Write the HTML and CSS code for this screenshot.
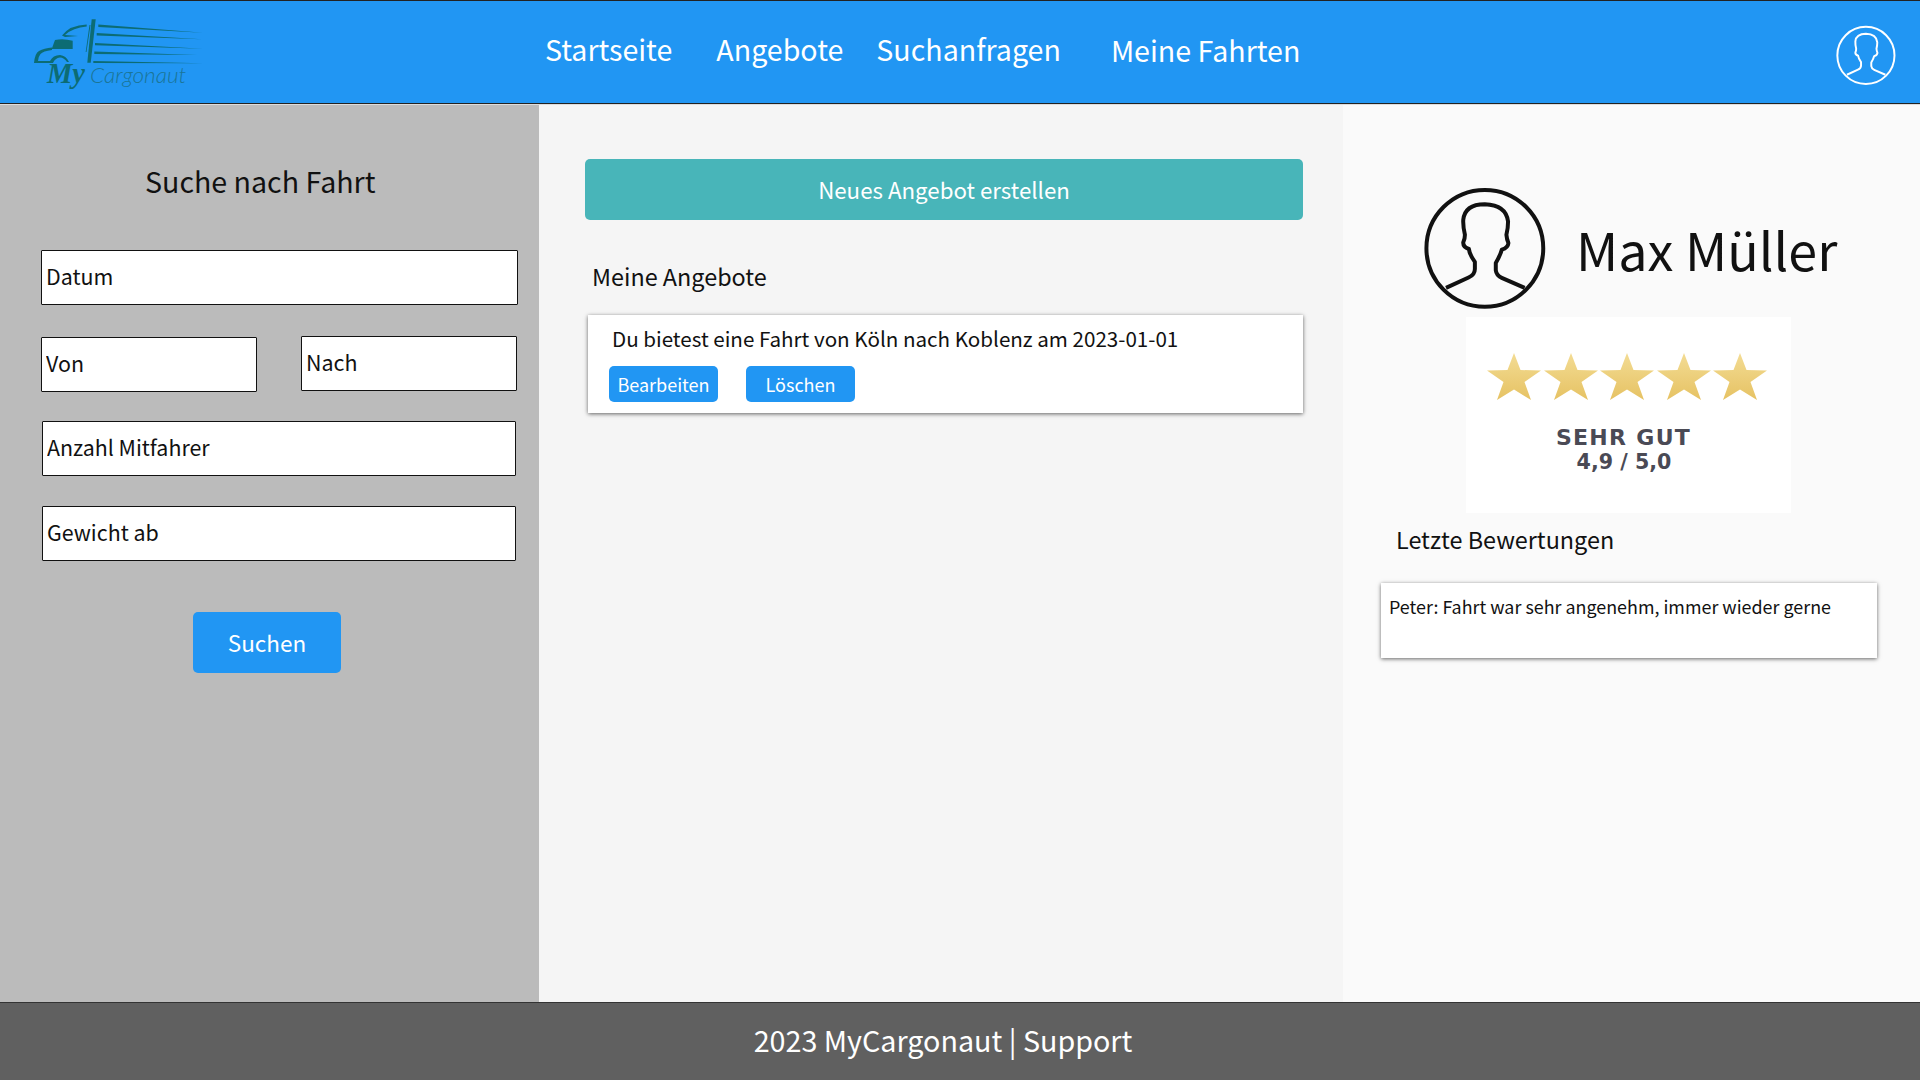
FILE: index.html
```html
<!DOCTYPE html>
<html lang="de">
<head>
    <meta charset="UTF-8">
    <meta name="viewport" content="width=device-width, initial-scale=1.0">
    <title>MyCargonaut</title>
    <link rel="stylesheet" href="styles.css">
</head>
<body>

    <svg class="defs" width="0" height="0">
        <defs>
            <symbol id="person" viewBox="0 0 505 473">
                <circle cx="252" cy="236" r="176" fill="none" stroke="currentColor" stroke-width="12"/>
                <path d="M135 355 L203 324 Q222 315 222 298 L222 277 Q206 255 204 238 Q186 232 187 218 Q192 208 192 195 Q186 170 187 150 Q192 103 252 103 Q316 105 322 155 Q322 175 317 195 Q318 208 323 220 Q322 234 303 240 Q298 258 285 280 L285 302 Q287 318 303 325 L372 355" fill="none" stroke="currentColor" stroke-width="12" stroke-linejoin="round"/>
            </symbol>
            <linearGradient id="gold" x1="0" y1="0" x2="0" y2="1">
                <stop offset="0" stop-color="#f3dc94"/>
                <stop offset="1" stop-color="#e6c263"/>
            </linearGradient>
            <symbol id="star" viewBox="0 0 54 47">
                <polygon points="27,0 33.5,17 54,17.5 37.5,29 44,47 27,36.5 10,47 16.5,29 0,17.5 20.5,17" fill="url(#gold)"/>
            </symbol>
        </defs>
    </svg>

    <header class="topbar">
        <svg class="logo" viewBox="0 0 190 75" width="190" height="75">
            <g fill="#0c6c74">
                <polygon points="58.7,1.3 62.7,1.3 57.7,44.7 54.3,44.7"/>
                <polygon points="65.3,6.5 170,14.7 65.3,9"/>
                <polygon points="63.7,15 168.7,21.3 63.7,17.5"/>
                <polygon points="62,25 170,30.7 62,27.2"/>
                <polygon points="61.3,33.5 163.7,37 61.3,36"/>
                <polygon points="60.3,43 170,45.3 60.3,45"/>
                <path d="M22 22 Q30 20 39.7 22.7 L39.7 31 L18.7 31 Z"/>
                <path d="M29 17.5 Q37 7 53.7 6.5 L53.7 8.5 Q40 9.5 32 17 L45 18 L32 19 Z"/>
                <polygon points="56.5,7 57.5,7 53.5,34 52.7,34"/>
                <path d="M1 45 Q2 35 6 33 Q11 30 19 29.5 L19 32 Q10 33 7.5 36 Q5 39 5 43 L17 43 Q20 37 27 37 Q33 37.5 36 44 L34 44 Q31 39.5 27 39.5 Q22 40 20 45 Z"/>
            </g>
            <text class="logo-my" x="14" y="65">My</text>
            <text class="logo-name" x="57" y="65">Cargonaut</text>
        </svg>
        <nav class="mainnav">
            <a class="nav-start" href="#">Startseite</a>
            <a class="nav-angebote" href="#">Angebote</a>
            <a class="nav-suche" href="#">Suchanfragen</a>
            <a class="nav-fahrten" href="#">Meine Fahrten</a>
        </nav>
        <svg class="top-user"><use href="#person"/></svg>
    </header>

    <main class="content">
        <aside class="search">
            <h2>Suche nach Fahrt</h2>
            <form>
                <input class="field field-datum" type="text" placeholder="Datum">
                <div class="route-row">
                    <input class="field field-von" type="text" placeholder="Von">
                    <input class="field field-nach" type="text" placeholder="Nach">
                </div>
                <input class="field field-wide field-anzahl" type="text" placeholder="Anzahl Mitfahrer">
                <input class="field field-wide" type="text" placeholder="Gewicht ab">
                <button class="btn btn-search" type="button">Suchen</button>
            </form>
        </aside>

        <section class="offers">
            <button class="btn btn-new" type="button">Neues Angebot erstellen</button>
            <h3>Meine Angebote</h3>
            <div class="card offer-card">
                <p>Du bietest eine Fahrt von Köln nach Koblenz am 2023-01-01</p>
                <div class="offer-actions">
                    <button class="btn btn-small" type="button">Bearbeiten</button>
                    <button class="btn btn-small" type="button">Löschen</button>
                </div>
            </div>
        </section>

        <section class="profile">
            <div class="profile-head">
                <svg class="big-user"><use href="#person"/></svg>
                <h1>Max Müller</h1>
            </div>
            <div class="rating">
                <div class="stars">
                    <svg class="star"><use href="#star"/></svg>
                    <svg class="star"><use href="#star"/></svg>
                    <svg class="star"><use href="#star"/></svg>
                    <svg class="star"><use href="#star"/></svg>
                    <svg class="star"><use href="#star"/></svg>
                </div>
                <div class="rating-label">SEHR GUT</div>
                <div class="rating-value">4,9 / 5,0</div>
            </div>
            <h3>Letzte Bewertungen</h3>
            <div class="card review-card">Peter: Fahrt war sehr angenehm, immer wieder gerne</div>
        </section>
    </main>

    <footer class="bottombar">2023 MyCargonaut | Support</footer>

</body>
</html>
```

FILE: styles.css
```css
* {
    box-sizing: border-box;
}
body {
    margin: 0;
    height: 1080px;
    overflow: hidden;
    display: flex;
    flex-direction: column;
    font-family: "Noto Sans CJK SC", "Noto Sans", sans-serif;
    color: #111;
}
.defs {
    position: absolute;
}
h1, h2, h3, p {
    margin: 0;
    font-weight: 400;
}

/* top bar */
.topbar {
    height: 104px;
    flex: none;
    display: flex;
    align-items: flex-start;
    background-color: #2196f3;
    border-top: 1px solid #222;
    border-bottom: 1px solid #222;
}
.logo {
    margin: 17px 0 0 33px;
    flex: none;
}
.logo-my {
    font-family: "Liberation Serif", serif;
    font-style: italic;
    font-weight: 700;
    font-size: 28.5px;
    fill: #0c6c74;
}
.logo-name {
    font-family: Lato, sans-serif;
    font-style: italic;
    font-weight: 300;
    font-size: 22.5px;
    fill: #1a7596;
}
.mainnav {
    display: flex;
    margin-left: 322px;
    padding-top: 26px;
}
.mainnav a {
    color: #fff;
    text-decoration: none;
    font-size: 28.6px;
    line-height: 44px;
}
.nav-angebote {
    margin-left: 44px;
}
.nav-suche {
    margin-left: 33px;
}
.nav-fahrten {
    margin-left: 50px;
    margin-top: 1px;
}
.top-user {
    width: 82px;
    height: 77px;
    margin: 16px 13px 0 auto;
    color: #fff;
}

/* main columns */
.content {
    flex: 1;
    display: flex;
    min-height: 0;
    border-top: 1px solid #ddd;
}
.search {
    width: 539px;
    flex: none;
    background-color: #bbb;
    padding-top: 56px;
}
.search h2 {
    font-size: 28.6px;
    line-height: 40px;
    margin: 0 0 49px 145px;
}
.offers {
    width: 804px;
    flex: none;
    background-color: #f5f5f5;
    padding: 54px 0 0 46px;
}
.profile {
    flex: 1;
    background-color: #fafafa;
    padding-top: 65px;
}

/* search form */
.field {
    display: block;
    height: 55px;
    padding: 0 4px 4px;
    background-color: #fff;
    border: 1px solid #111;
    border-radius: 1px;
    font-family: inherit;
    font-size: 21.4px;
    outline: none;
}
.field::placeholder {
    color: #111;
    opacity: 1;
}
.field-datum {
    width: 477px;
    margin: 0 0 31px 41px;
}
.route-row {
    display: flex;
    align-items: flex-start;
    margin: 0 0 29px 41px;
}
.field-von {
    width: 216px;
    margin-top: 1px;
}
.field-nach {
    width: 216px;
    margin-left: 44px;
}
.field-wide {
    width: 474px;
    margin-left: 42px;
}
.field-anzahl {
    margin-bottom: 30px;
}

/* buttons */
.btn {
    display: block;
    border: none;
    border-radius: 5px;
    background-color: #2196f3;
    color: #fff;
    font-family: inherit;
    cursor: pointer;
}
.btn-search {
    width: 148px;
    height: 61px;
    margin: 51px 0 0 193px;
    padding-bottom: 2px;
    font-size: 22.5px;
}
.btn-new {
    width: 718px;
    height: 61px;
    padding-bottom: 2px;
    background-color: #48b5b9;
    font-size: 22.3px;
}
.btn-small {
    width: 109px;
    height: 36px;
    padding: 0;
    font-size: 18px;
}

/* cards */
.card {
    background-color: #fff;
    box-shadow: 0 1px 4px rgba(0, 0, 0, 0.6);
}
.offers h3 {
    font-size: 23.4px;
    line-height: 34px;
    margin: 39px 0 22px 7px;
}
.offer-card {
    width: 715px;
    height: 98px;
    margin-left: 3px;
    padding: 7px 0 0 24px;
}
.offer-card p {
    font-size: 20.6px;
    line-height: 32px;
}
.offer-actions {
    display: flex;
    gap: 28px;
    margin: 12px 0 0 -3px;
}

/* profile column */
.profile-head {
    display: flex;
    align-items: flex-start;
}
.big-user {
    width: 168px;
    height: 157px;
    margin-left: 58px;
    flex: none;
}
.profile-head h1 {
    font-size: 52px;
    line-height: 70px;
    margin: 44px 0 0 7px;
}
.rating {
    width: 325px;
    height: 196px;
    margin: -10px 0 0 123px;
    background-color: #fff;
    padding-top: 36px;
    text-align: center;
    color: #4a4a55;
    font-family: "DejaVu Sans", sans-serif;
    font-weight: 700;
}
.stars {
    display: flex;
    gap: 2.5px;
    margin-left: 21px;
    margin-bottom: 26px;
}
.star {
    width: 54px;
    height: 47px;
}
.rating-label {
    font-size: 22px;
    line-height: 24px;
    letter-spacing: 1.3px;
    margin-left: -10px;
}
.rating-value {
    font-size: 20.6px;
    line-height: 24px;
    margin-left: -9px;
}
.profile h3 {
    font-size: 23.4px;
    line-height: 34px;
    margin: 9px 0 27px 53px;
}
.review-card {
    width: 496px;
    height: 75px;
    margin-left: 38px;
    padding: 8px 0 0 8px;
    font-size: 17.9px;
    line-height: 30px;
}

/* footer */
.bottombar {
    height: 78px;
    flex: none;
    background-color: #606060;
    border-top: 1px solid #333;
    color: #fff;
    font-size: 28.7px;
    line-height: 73px;
    text-align: center;
    padding-right: 34px;
}
```
